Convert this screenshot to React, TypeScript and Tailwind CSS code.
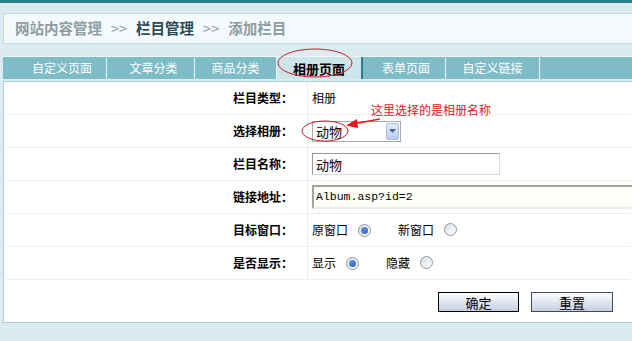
import React from 'react';

const tabs = [
  { label: '自定义页面', w: 'w-[104px]', pad: 'pl-[29px] justify-start' },
  { label: '文章分类', w: 'w-[88px]', pad: 'pl-[6px] justify-center' },
  { label: '商品分类', w: 'w-[82px]', pad: 'justify-center' },
  { label: '相册页面', w: 'w-[86px]', pad: 'justify-center', active: true },
  { label: '表单页面', w: 'w-[83px]', pad: 'pl-[4px] justify-center' },
  { label: '自定义链接', w: 'w-[94px]', pad: 'justify-center' },
];

const Radio = ({ checked }: { checked?: boolean }) => (
  <span className="inline-flex items-center justify-center w-[13px] h-[13px] rounded-full border border-[#8c97a2] bg-gradient-to-br from-[#dcdfe2] to-[#ffffff]">
    {checked && <span className="w-[7px] h-[7px] rounded-full bg-gradient-to-br from-[#6d9ae0] to-[#2a5fbf]" />}
  </span>
);

const Row = ({ label, children }: { label: string; children: React.ReactNode }) => (
  <div className="grid grid-cols-[302px_1fr] h-[33px] border-b border-[#e9f0f2]">
    <div className="flex items-center justify-end pr-[14px] border-r border-[#e9f0f2] text-[12px] font-bold text-black">
      {label}：
    </div>
    <div className="flex items-center pl-[4px] text-[12px] text-black">{children}</div>
  </div>
);

export default function App() {
  return (
    <div className="relative w-[632px] h-[341px] overflow-hidden bg-[#dcebf0] font-['Noto_Sans_CJK_SC',sans-serif] leading-none">
      <div className="h-[3px] bg-[#2e7f8e]" />

      {/* breadcrumb */}
      <div className="mt-[10px] ml-[3px] h-[31px] border border-r-0 border-[#c2dbe3] bg-[#f4f9fb] flex items-center pl-[11px] text-[14.5px]">
        <span className="font-bold text-[#8d9da2]">网站内容管理</span>
        <span className="mx-[9px] text-[#97a6aa]">&gt;&gt;</span>
        <span className="font-bold text-[#2d4b56]">栏目管理</span>
        <span className="mx-[9px] text-[#97a6aa]">&gt;&gt;</span>
        <span className="font-bold text-[#8d9da2]">添加栏目</span>
      </div>

      {/* tab bar */}
      <div className="mt-[12px] ml-[3px] border-t border-[#eef6f8]">
        <div className="h-[22px] bg-[#7ebcc8] flex">
          {tabs.map((t) => (
            <div
              key={t.label}
              className={`${t.w} h-full flex items-center ${t.pad} text-[12px] ${
                t.active
                  ? 'bg-[#cbe5eb] font-bold text-[13px] text-black border-r-2 border-[#2f7e8e]'
                  : 'text-white border-r border-[#e8f4f7]'
              }`}
            >
              {t.label}
            </div>
          ))}
        </div>
      </div>

      {/* form */}
      <div className="mt-[2px] ml-[3px] border border-r-0 border-[#a9d0da] bg-white px-[2px]">
        <Row label="栏目类型">相册</Row>
        <Row label="选择相册">
          <div className="flex items-center w-[89px] h-[21px] border border-[#a5acb2] bg-white">
            <span className="flex-1 pl-[3px] text-[13px]">动物</span>
            <span className="w-[13px] h-[17px] mr-[1px] flex items-center justify-center rounded-[2px] border border-[#a8bde0] bg-gradient-to-b from-[#e0eafb] to-[#b9cdf2]">
              <svg width="7" height="4" viewBox="0 0 7 4">
                <path d="M0 0h7L3.5 4z" fill="#4d6185" />
              </svg>
            </span>
          </div>
        </Row>
        <Row label="栏目名称">
          <div className="w-[188px] h-[22px] border border-[#9a9a9a] border-r-[#dcdcdc] border-b-[#dcdcdc] flex items-center pl-[3px] text-[13px]">
            动物
          </div>
        </Row>
        <Row label="链接地址">
          <div className="w-[400px] h-[24px] border-2 border-[#a3a39b] border-r-[#efeee6] border-b-[#efeee6] bg-[#fffef9] flex items-center pl-[2px] font-['Liberation_Mono',monospace] text-[11.5px]">
            Album.asp?id=2
          </div>
        </Row>
        <Row label="目标窗口">
          <span>原窗口</span>
          <span className="ml-[10px]"><Radio checked /></span>
          <span className="ml-[27px]">新窗口</span>
          <span className="ml-[10px]"><Radio /></span>
        </Row>
        <Row label="是否显示">
          <span>显示</span>
          <span className="ml-[10px]"><Radio checked /></span>
          <span className="ml-[27px]">隐藏</span>
          <span className="ml-[10px]"><Radio /></span>
        </Row>
        <div className="h-[42px] flex items-start pt-[12px] pl-[432px] gap-[12px]">
          <button className="w-[81px] h-[20px] border border-black bg-gradient-to-b from-[#ffffff] to-[#c5cee0] text-[13px] text-black flex items-center justify-center">
            确定
          </button>
          <button className="w-[82px] h-[20px] border border-[#3d4a5c] bg-gradient-to-b from-[#ffffff] to-[#c5cee0] text-[13px] text-black flex items-center justify-center">
            重置
          </button>
        </div>
      </div>

      {/* annotation overlays */}
      <span className="absolute left-[371px] top-[104px] text-[12px] text-[#e8141e]">这里选择的是相册名称</span>
      <svg className="absolute left-0 top-0 pointer-events-none" width="632" height="341">
        <ellipse cx="315" cy="63" rx="37" ry="14" fill="none" stroke="#c81e28" strokeWidth="1" />
        <ellipse cx="325" cy="131" rx="23" ry="10" fill="none" stroke="#c81e28" strokeWidth="1" />
        <line x1="380" y1="119" x2="356" y2="123.5" stroke="#e8141e" strokeWidth="1.5" />
        <path d="M346 125.5 L357 119 L358 128 Z" fill="#e8141e" />
      </svg>
    </div>
  );
}
